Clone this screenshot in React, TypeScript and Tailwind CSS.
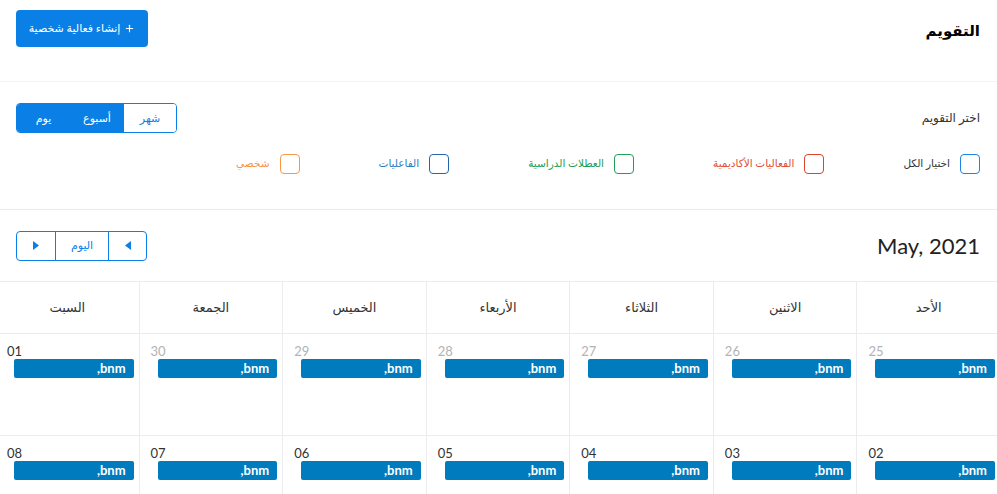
import { Plus } from 'lucide-react'

const calendars = [
  { label: 'اختيار الكل', box: 'border-[#1f84e6]', text: 'text-[#333333]' },
  { label: 'الفعاليات الأكاديمية', box: 'border-[#d9452b]', text: 'text-[#e0503a]' },
  { label: 'العطلات الدراسية', box: 'border-[#1f9d55]', text: 'text-[#1f9d55]' },
  { label: 'الفاعليات', box: 'border-[#2467a8]', text: 'text-[#2a7dbf]' },
  { label: 'شخصي', box: 'border-[#f79847]', text: 'text-[#f59447]' },
]

const days = ['الأحد', 'الاثنين', 'الثلاثاء', 'الأربعاء', 'الخميس', 'الجمعة', 'السبت']

const weeks = [
  [
    { d: '25', muted: true },
    { d: '26', muted: true },
    { d: '27', muted: true },
    { d: '28', muted: true },
    { d: '29', muted: true },
    { d: '30', muted: true },
    { d: '01', muted: false },
  ],
  [
    { d: '02', muted: false },
    { d: '03', muted: false },
    { d: '04', muted: false },
    { d: '05', muted: false },
    { d: '06', muted: false },
    { d: '07', muted: false },
    { d: '08', muted: false },
  ],
]

export default function App() {
  return (
    <div
      dir="rtl"
      className="w-full h-[494px] overflow-hidden bg-white text-[#333]"
      style={{ fontFamily: 'Lato, "DejaVu Sans", sans-serif' }}
    >
      {/* Header */}
      <div className="h-[82px] flex items-center justify-between pr-[17px] pl-4 border-b border-[#f3f3f3]">
        <h1 className="text-[15px] font-bold text-black -mt-[20px]">التقويم</h1>
        <button className="h-[37px] w-[132px] -mt-[24px] rounded-[4px] bg-[#0a7fe6] text-white text-[11px] flex items-center justify-center gap-1">
          <Plus size={11} strokeWidth={2.5} />
          <span>إنشاء فعالية شخصية</span>
        </button>
      </div>

      {/* Calendar picker */}
      <div className="h-[128px] pt-[21px] pr-[17px] pl-4 border-b border-[#ececec]">
        <div className="h-[30px] flex items-center justify-between">
          <span className="text-[12px] text-[#333]">اختر التقويم</span>
          <div className="flex h-[30px] rounded-[4px] border border-[#0a7fe6] overflow-hidden text-[11px]">
            <div className="w-[52px] flex items-center justify-center bg-white text-[#0a7fe6]">شهر</div>
            <div className="w-[54px] flex items-center justify-center bg-[#0a7fe6] text-white">أسبوع</div>
            <div className="w-[53px] flex items-center justify-center bg-[#0a7fe6] text-white">يوم</div>
          </div>
        </div>
        <div className="mt-[21px] flex items-center gap-[79px]">
          {calendars.map((c) => (
            <label key={c.label} className="flex items-center gap-[10px]">
              <span className={`w-[20px] h-[20px] rounded-[4px] border ${c.box}`} />
              <span className={`text-[10.5px] ${c.text}`}>{c.label}</span>
            </label>
          ))}
        </div>
      </div>

      {/* Month toolbar */}
      <div className="h-[71px] flex items-center justify-between pr-[17px] pl-4">
        <h2 className="text-[22px] text-[#222]" dir="ltr">May, 2021</h2>
        <div className="flex h-[30px] rounded-[4px] border border-[#0a7fe6] overflow-hidden text-[11px] text-[#0a7fe6]">
          <button className="w-[38px] flex items-center justify-center border-l border-[#0a7fe6]">
            <svg width="6" height="9" viewBox="0 0 6 9"><path d="M6 0 L0 4.5 L6 9 Z" fill="#0a7fe6" /></svg>
          </button>
          <button className="w-[53px] flex items-center justify-center border-l border-[#0a7fe6]">اليوم</button>
          <button className="w-[38px] flex items-center justify-center">
            <svg width="6" height="9" viewBox="0 0 6 9"><path d="M0 0 L6 4.5 L0 9 Z" fill="#0a7fe6" /></svg>
          </button>
        </div>
      </div>

      {/* Month grid */}
      <div className="w-[1005px] mr-[-3px]">
        <div className="grid grid-cols-7 h-[53px] border-y border-[#ebebf0]">
          {days.map((d) => (
            <div key={d} className="flex items-center justify-center border-l border-[#ebebf0] text-[13px] text-[#333]">
              {d}
            </div>
          ))}
        </div>
        {weeks.map((w, i) => (
          <div key={i} className="grid grid-cols-7 h-[102px] border-b border-[#ebebf0]">
            {w.map((c) => (
              <div key={c.d} className="border-l border-[#ebebf0] pt-[9px]">
                <div dir="ltr" className={`pl-[11px] text-[13px] leading-[16px] ${c.muted ? 'text-[#b3b3b3]' : 'text-[#333]'}`}>
                  {c.d}
                </div>
                <div className="ml-[18px] mr-[5px] h-[19px] rounded-[2px] bg-[#007bbd] flex items-center justify-start pr-[8px]">
                  <span dir="ltr" className="text-white text-[13px] font-bold">,bnm</span>
                </div>
              </div>
            ))}
          </div>
        ))}
      </div>
    </div>
  )
}
